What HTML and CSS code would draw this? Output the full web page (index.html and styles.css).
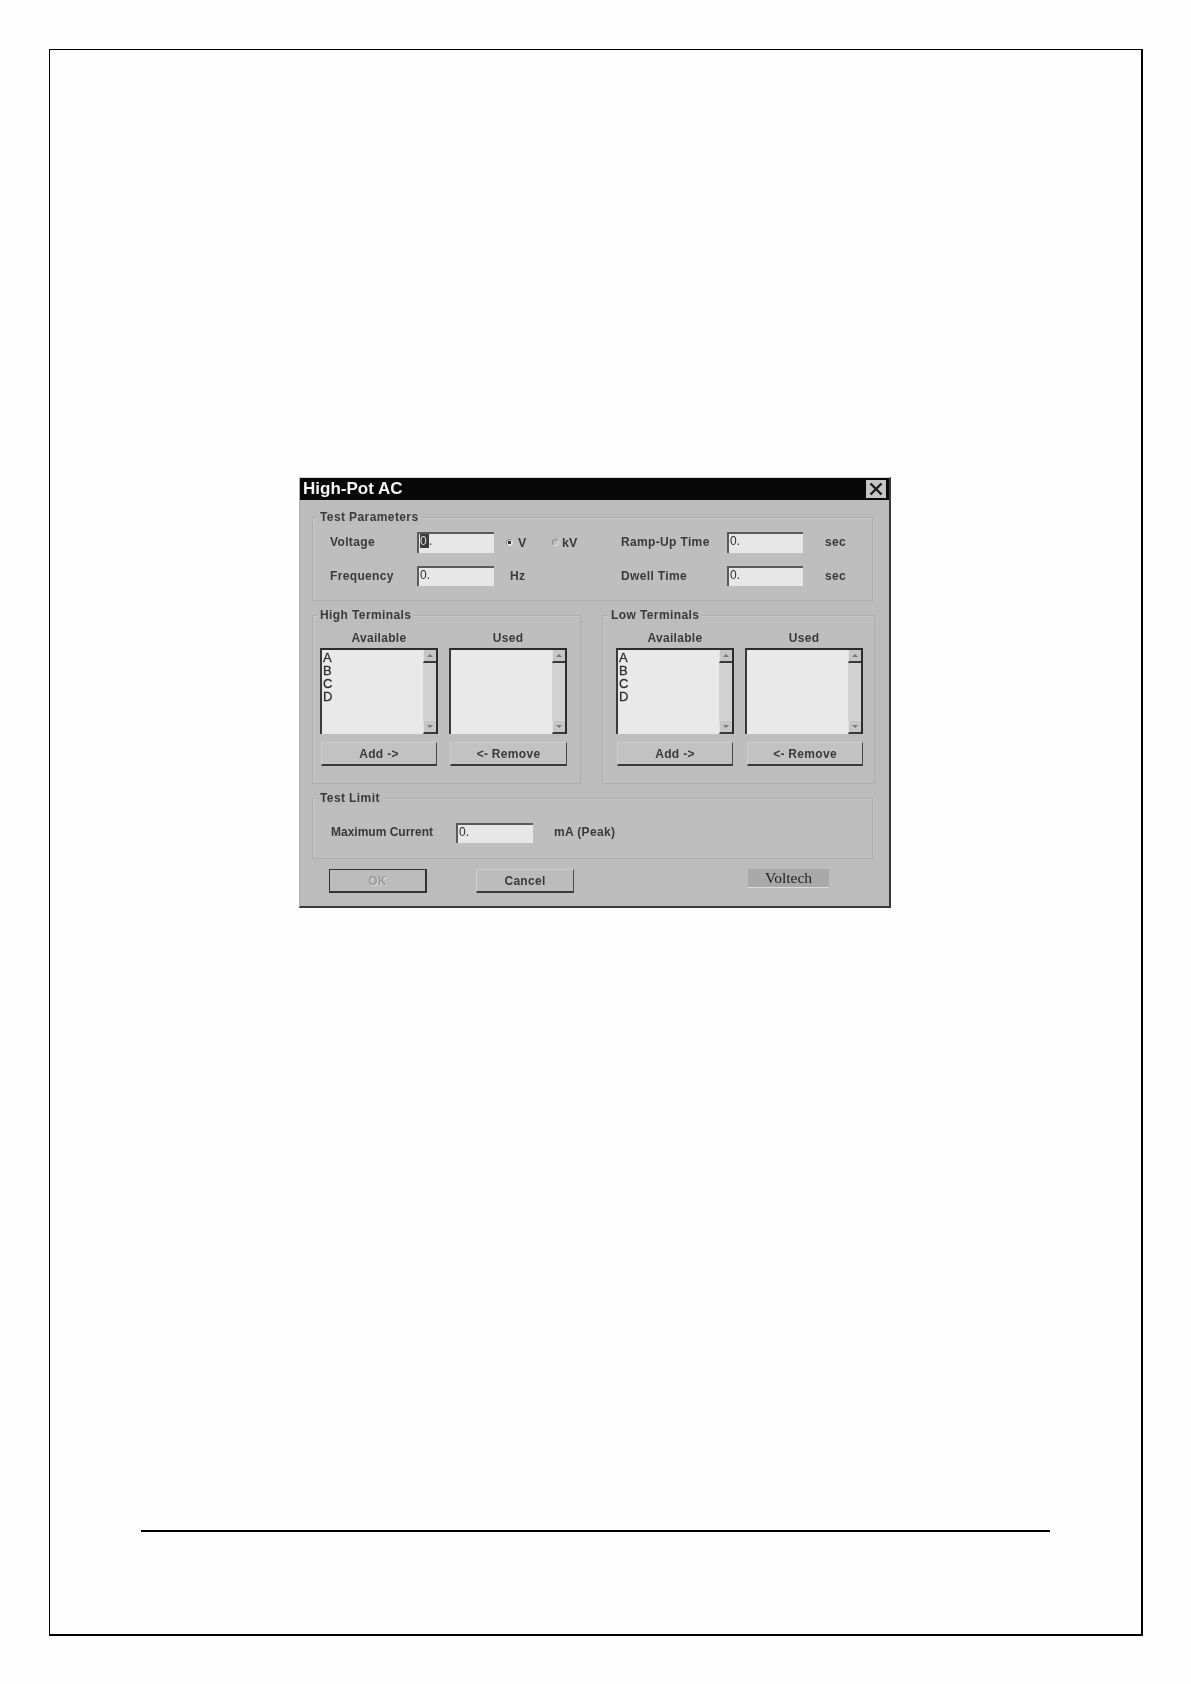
FILE: index.html
```html
<!DOCTYPE html>
<html lang="en">
<head>
<meta charset="utf-8">
<title>High-Pot AC</title>
<link rel="stylesheet" href="styles.css">
</head>
<body>
<main class="page">
  <section class="dialog">
    <header class="titlebar">
      <span class="title">High-Pot AC</span>
      <span class="close"><svg viewBox="0 0 20 18" width="20" height="18"><path d="M4.5 3.5 L15.5 14.5 M15.5 3.5 L4.5 14.5" stroke="#1c1c1c" stroke-width="2.4" fill="none"/></svg></span>
    </header>
    <div class="body">
      <div class="group params">
        <div class="legend">Test Parameters</div>
        <div class="param-grid">
          <span class="label">Voltage</span>
          <span class="field"><span class="sel">0</span>.</span>
          <span class="radios">
            <span class="radio on"></span><span class="rtext v">V</span>
            <span class="radio kv"></span><span class="rtext">kV</span>
          </span>
          <span class="label">Ramp-Up Time</span>
          <span class="field">0.</span>
          <span class="label unit">sec</span>
          <span class="label">Frequency</span>
          <span class="field">0.</span>
          <span class="label hz">Hz</span>
          <span class="label">Dwell Time</span>
          <span class="field">0.</span>
          <span class="label unit">sec</span>
        </div>
      </div>
      <div class="terminals">
        <div class="group term high">
          <div class="legend">High Terminals</div>
          <div class="term-grid">
            <span class="head">Available</span>
            <span class="head">Used</span>
            <div class="list">
              <div class="items"><div>A</div><div>B</div><div>C</div><div>D</div></div>
              <div class="scroll"><span class="arrow"><i class="up"></i></span><span class="track"></span><span class="arrow"><i class="down"></i></span></div>
            </div>
            <div class="list">
              <div class="items"></div>
              <div class="scroll"><span class="arrow"><i class="up"></i></span><span class="track"></span><span class="arrow"><i class="down"></i></span></div>
            </div>
            <span class="btn add">Add -&gt;</span>
            <span class="btn rem">&lt;- Remove</span>
          </div>
        </div>
        <div class="group term low">
          <div class="legend">Low Terminals</div>
          <div class="term-grid">
            <span class="head">Available</span>
            <span class="head">Used</span>
            <div class="list">
              <div class="items"><div>A</div><div>B</div><div>C</div><div>D</div></div>
              <div class="scroll"><span class="arrow"><i class="up"></i></span><span class="track"></span><span class="arrow"><i class="down"></i></span></div>
            </div>
            <div class="list">
              <div class="items"></div>
              <div class="scroll"><span class="arrow"><i class="up"></i></span><span class="track"></span><span class="arrow"><i class="down"></i></span></div>
            </div>
            <span class="btn add">Add -&gt;</span>
            <span class="btn rem">&lt;- Remove</span>
          </div>
        </div>
      </div>
      <div class="group limit">
        <div class="legend">Test Limit</div>
        <div class="limit-row">
          <span class="label maxc">Maximum Current</span>
          <span class="field">0.</span>
          <span class="label peak">mA (Peak)</span>
        </div>
      </div>
      <div class="actions">
        <span class="btn big ok">OK</span>
        <span class="btn big cancel">Cancel</span>
        <span class="logo">Voltech</span>
      </div>
    </div>
  </section>
  <hr class="rule">
</main>
</body>
</html>
```
FILE: styles.css
```css
* { box-sizing: border-box; }
html, body { margin: 0; padding: 0; background: #fefefe; }
body { height: 1684px; padding: 49px 0 0 49px; font-family: "Liberation Sans", Arial, sans-serif; overflow: hidden; }

.page {
  width: 1094px;
  height: 1587px;
  border-top: 1px solid #000;
  border-left: 1px solid #000;
  border-right: 2px solid #000;
  border-bottom: 2px solid #000;
  padding: 427px 0 0 249px;
}

.dialog {
  width: 592px;
  height: 431px;
  background: #bcbcbc;
  border-top: 1px solid #d8d8d8;
  border-left: 1px solid #b0b0b0;
  border-right: 2px solid #3a3a3a;
  border-bottom: 2px solid #3a3a3a;
  filter: blur(0.75px);
}

.titlebar {
  height: 22px;
  background: #080808;
  display: flex;
  align-items: center;
  justify-content: space-between;
  padding: 0 3px 0 3px;
}
.title { color: #f4f4f4; font-weight: 700; font-size: 17px; line-height: 22px; }
.close {
  width: 20px;
  height: 18px;
  background: #c4c4c4;
  display: block;
}
.close svg { display: block; }

.body { padding: 17px 0 0 12px; }

.group {
  border: 1px solid #aeaeae;
  box-shadow: inset 1px 1px 0 #c6c6c6;
  background: #bebebe;
}
.legend {
  width: fit-content;
  height: 15px;
  margin-top: -8px;
  padding: 0 3px;
  line-height: 15px;
  background: #bcbcbc;
  font-size: 12px;
  font-weight: 700;
  letter-spacing: 0.4px;
  color: #3a3a3a;
}
.params .legend { margin-left: -13px; }
.high .legend { margin-left: -3px; }
.low .legend { margin-left: -8px; }
.limit .legend { margin-left: -14px; }

.params { width: 561px; height: 84px; padding: 0 0 0 17px; }
.param-grid {
  display: grid;
  grid-template-columns: 87px 77px 127px 106px 76px auto;
  grid-template-rows: 21px 20px;
  row-gap: 13px;
  margin-top: 7px;
}
.label {
  font-size: 12px;
  font-weight: 700;
  letter-spacing: 0.35px;
  line-height: 21px;
  color: #3a3a3a;
  white-space: nowrap;
}
.field {
  display: block;
  background: #e7e7e7;
  border-top: 2px solid #5a5a5a;
  border-left: 2px solid #5a5a5a;
  font-size: 12px;
  line-height: 14px;
  color: #2e2e2e;
  padding-left: 1px;
}
.sel { display: inline-block; background: #3c3c3c; color: #ddd; width: 9px; }
.radios { display: flex; align-items: center; padding-left: 12px; }
.radio {
  width: 7px;
  height: 7px;
  border-radius: 50%;
  border: 1px solid #8a8a8a;
  border-right-color: #ddd;
  border-bottom-color: #ddd;
  margin-right: 5px;
}
.radio.on { background: radial-gradient(circle, #333 0 1.5px, #e8e8e8 2px); }
.radio.kv { margin-right: 3px; }
.rtext { font-size: 12.5px; font-weight: 700; color: #3a3a3a; }
.rtext.v { width: 34px; }
.unit { margin-left: 22px; }
.hz { margin-left: 16px; }

.terminals { display: flex; margin-top: 14px; gap: 21px; }
.term { height: 169px; }
.high { width: 269px; padding-left: 7px; }
.low { width: 273px; padding-left: 13px; }
.term-grid {
  display: grid;
  grid-template-columns: 118px 118px;
  grid-template-rows: 19px 86px 32px;
  column-gap: 11px;
  margin-top: 6px;
}
.head {
  text-align: center;
  font-size: 12px;
  font-weight: 700;
  letter-spacing: 0.3px;
  line-height: 15px;
  padding-top: 2px;
  color: #3a3a3a;
}
.list {
  display: flex;
  background: #e9e9e9;
  border-top: 2px solid #2c2c2c;
  border-left: 2px solid #3a3a3a;
  border-right: 2px solid #2c2c2c;
}
.items {
  flex: 1;
  font-size: 13px;
  line-height: 13px;
  color: #2e2e2e;
  padding: 1px 0 0 1px;
  -webkit-text-stroke: 0.3px #2e2e2e;
}
.scroll {
  width: 13px;
  display: flex;
  flex-direction: column;
  background: #d2d2d2;
}
.track { flex: 1; }
.arrow {
  height: 13px;
  display: flex;
  align-items: center;
  justify-content: center;
  background: #c6c6c6;
  border-bottom: 2px solid #3a3a3a;
  border-left: 1px solid #e0e0e0;
}
.arrow i { display: block; width: 0; height: 0; border-left: 3px solid transparent; border-right: 3px solid transparent; }
.arrow .up { border-bottom: 3px solid #777; }
.arrow .down { border-top: 3px solid #777; }

.btn {
  display: flex;
  align-items: center;
  justify-content: center;
  height: 24px;
  background: #c2c2c2;
  border-top: 1px solid #cdcdcd;
  border-left: 1px solid #cdcdcd;
  border-right: 1px solid #4a4a4a;
  border-bottom: 2px solid #3a3a3a;
  font-size: 12px;
  font-weight: 700;
  letter-spacing: 0.3px;
  color: #3a3a3a;
}
.term-grid .btn { align-self: end; }
.add { margin: 0 1px; }
.rem { margin-left: 1px; }
.low .rem { margin-left: 2px; }

.limit { width: 561px; height: 61px; margin-top: 14px; padding-left: 18px; }
.limit-row { display: flex; align-items: center; margin-top: 16px; }
.maxc { width: 125px; letter-spacing: 0; }
.limit-row .field { width: 77px; height: 20px; }
.peak { margin-left: 21px; }

.actions { display: flex; margin: 10px 0 0 17px; }
.big { width: 98px; background: #bcbcbc; }
.ok {
  color: #9a9a9a;
  border: 2px solid #333;
  border-top: 1px solid #333;
  border-left: 1px solid #333;
  text-shadow: 1px 1px 0 #d8d8d8;
}
.cancel { margin-left: 49px; }
.logo {
  width: 81px;
  height: 19px;
  margin-left: 174px;
  background: #a9a9a9;
  border-bottom: 1px solid #dcdcdc;
  font-family: "Liberation Serif", serif;
  font-size: 15.5px;
  line-height: 18px;
  text-align: center;
  color: #222;
}

.rule {
  margin: 622px 0 0 -158px;
  width: 909px;
  height: 2px;
  border: 0;
  background: #000;
}
```
